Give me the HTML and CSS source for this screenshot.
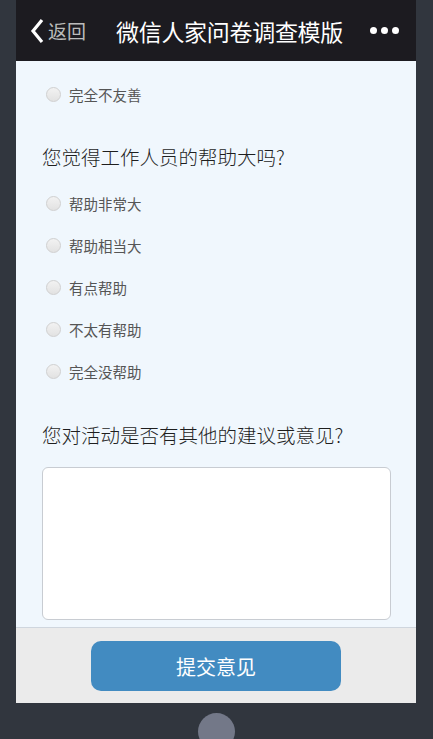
FILE: index.html
```html
<!DOCTYPE html>
<html lang="zh-CN">
<head>
    <meta charset="UTF-8">
    <meta name="viewport" content="width=device-width, initial-scale=1.0">
    <title>微信人家问卷调查模版</title>
    <link rel="stylesheet" href="styles.css">
</head>
<body>
    <div class="phone">
        <div class="screen">
            <div class="topbar">
                <a class="back" href="#">
                    <svg width="14" height="26" viewBox="0 0 14 26"><path d="M12 2 L3 13 L12 24" fill="none" stroke="#fff" stroke-width="3.2"/></svg>
                    <span>返回</span>
                </a>
                <h1 class="title">微信人家问卷调查模版</h1>
                <div class="more"><i></i><i></i><i></i></div>
            </div>

            <div class="content">
                <label class="option"><span class="radio"></span>完全不友善</label>

                <h2 class="question">您觉得工作人员的帮助大吗?</h2>
                <label class="option"><span class="radio"></span>帮助非常大</label>
                <label class="option"><span class="radio"></span>帮助相当大</label>
                <label class="option"><span class="radio"></span>有点帮助</label>
                <label class="option"><span class="radio"></span>不太有帮助</label>
                <label class="option"><span class="radio"></span>完全没帮助</label>

                <h2 class="question q-last">您对活动是否有其他的建议或意见?</h2>
                <textarea class="advice"></textarea>
            </div>

            <div class="footer">
                <button class="submit">提交意见</button>
            </div>
        </div>
        <div class="home"></div>
    </div>
</body>
</html>
```

FILE: styles.css
```css
body {
    margin: 0;
    background-color: #31363e;
    font-family: "Noto Sans CJK SC", "Noto Sans", sans-serif;
    height: 739px;
    overflow: hidden;
}
.phone {
    width: 400px;
    margin-left: 16px;
}
.screen {
    display: flex;
    flex-direction: column;
    height: 703px;
}
.topbar {
    height: 61px;
    background-color: #1c1b20;
    display: flex;
    align-items: center;
    padding-left: 14px;
    padding-right: 17px;
}
.back {
    display: flex;
    align-items: center;
    gap: 4px;
    color: #bbbbbb;
    text-decoration: none;
    font-size: 19px;
    width: 86px;
}
.title {
    margin: 0;
    color: #fff;
    font-size: 23px;
    font-weight: normal;
    letter-spacing: -0.3px;
    flex: 1;
    white-space: nowrap;
}
.more {
    display: flex;
    gap: 4px;
}
.more i {
    width: 7px;
    height: 7px;
    border-radius: 50%;
    background-color: #fff;
}
.content {
    flex: 1;
    background-color: #f0f7fd;
    padding: 12px 25px 0 26px;
    overflow: hidden;
}
.option {
    display: flex;
    align-items: center;
    height: 42px;
    font-size: 14.5px;
    color: #555;
    padding-left: 4px;
}
.radio {
    width: 13px;
    height: 13px;
    border: 1px solid #d0d0d0;
    border-radius: 50%;
    background: linear-gradient(#f2f2f2, #e2e2e2);
    margin-right: 8px;
}
.question {
    margin: 27px 0 10px 0;
    height: 30px;
    line-height: 30px;
    font-size: 19.5px;
    font-weight: 300;
    color: #1e1e1e;
    white-space: nowrap;
}
.q-last {
    margin-top: 28px;
    margin-bottom: 17px;
}
.advice {
    display: block;
    box-sizing: border-box;
    width: 100%;
    height: 153px;
    margin: 0;
    border: 1px solid #c8ccd2;
    border-radius: 6px;
    background-color: #fff;
    resize: none;
}
.footer {
    box-sizing: border-box;
    height: 76px;
    background-color: #ebebeb;
    border-top: 1px solid #cfd6de;
    display: flex;
    justify-content: center;
    padding-top: 13px;
}
.submit {
    width: 250px;
    height: 50px;
    border: none;
    border-radius: 10px;
    background-color: #428bc1;
    color: #fff;
    font-family: inherit;
    font-size: 20px;
}
.home {
    width: 37px;
    height: 37px;
    border-radius: 50%;
    background-color: #737888;
    margin: 10px auto 0 auto;
}
```
